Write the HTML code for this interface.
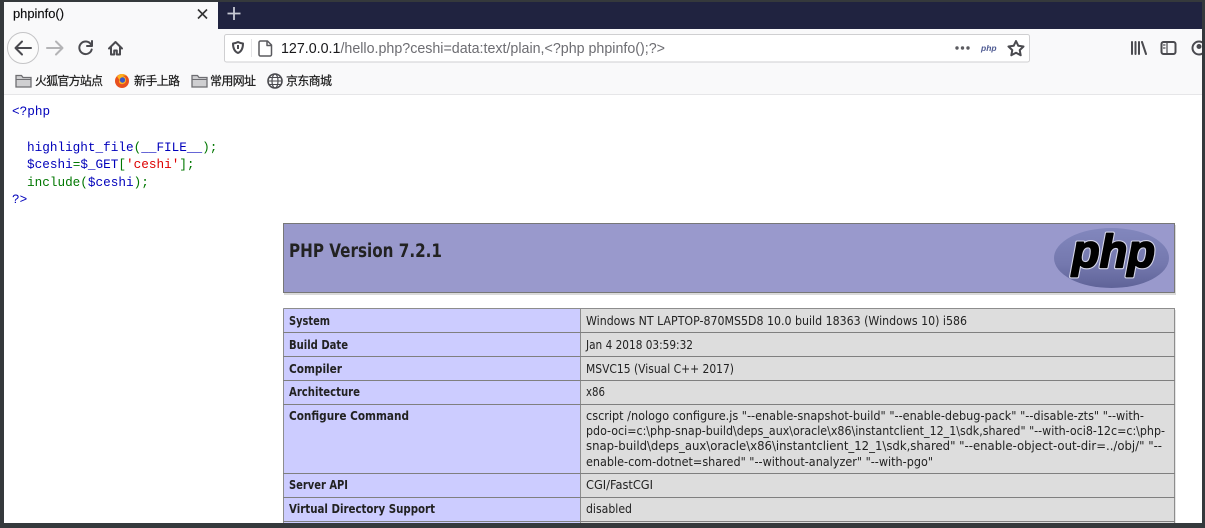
<!DOCTYPE html>
<html><head><meta charset="utf-8"><title>phpinfo()</title>
<style>
html,body{margin:0;padding:0;background:#35393c;width:1205px;height:528px;overflow:hidden}
svg{display:block;filter:blur(.3px)}
text{font-family:"Liberation Sans","Noto Sans CJK SC",sans-serif;white-space:pre}
.c{font-family:"Liberation Mono","Noto Sans CJK SC",monospace;font-size:12.7px}
.t{font-family:"DejaVu Sans","Liberation Sans",sans-serif;font-size:12.4px;fill:#222}
.b{font-family:"DejaVu Sans","Liberation Sans",sans-serif;font-size:12.4px;font-weight:bold;fill:#222}
.k{font-size:12px;fill:#1a1a1a;stroke:#1a1a1a;stroke-width:.2px}
.ic{fill:none;stroke:#4a4a4f;stroke-width:2px;stroke-linecap:round;stroke-linejoin:round}
</style></head><body>
<svg width="1205" height="528" viewBox="0 0 1205 528" xmlns="http://www.w3.org/2000/svg">
<defs><linearGradient id="lg" x1="0" y1="0" x2="0" y2="1"><stop offset="0" stop-color="#8287bd"/><stop offset=".6" stop-color="#7478ae"/><stop offset="1" stop-color="#5f6398"/></linearGradient></defs>
<rect width="1205" height="528" fill="#35393c"/>
<clipPath id="pg"><rect x="4" y="2" width="1198" height="521"/></clipPath>
<g clip-path="url(#pg)">
<rect x="4" y="2" width="1198" height="27" fill="#202340"/>
<rect x="4" y="2" width="214" height="27" fill="#f9f9fa"/>
<rect x="4" y="29" width="1198" height="65" fill="#f9f9fa"/>
<rect x="4" y="94" width="1198" height="1" fill="#e6e6e8"/>
<rect x="4" y="95" width="1198" height="430" fill="#fff"/>

<text x="13" y="18" font-size="12.5" fill="#0c0c0d" stroke="#0c0c0d" stroke-width=".15" textLength="51" lengthAdjust="spacingAndGlyphs">phpinfo()</text>
<path d="M198 9.500l9 9M207 9.500l-9 9" stroke="#333" stroke-width="1.6" fill="none"/>
<path d="M234 7v13M227.500 13.500h13" stroke="#c8cad4" stroke-width="1.800" fill="none"/>

<circle cx="23" cy="48" r="15.500" fill="#fbfbfb" stroke="#c4c4c6"/>
<path d="M31 48H16M22 41.500l-6.500 6.500 6.500 6.500" class="ic"/>
<path d="M62 48H47M56 41.500l6.500 6.500-6.500 6.500" class="ic" style="stroke:#b4b4b6"/>
<path d="M91 44.500a6.300 6.300 0 1 0 .7 5" class="ic"/>
<path d="M92 41v5h-5" class="ic"/>
<path d="M109 48.500l6.500-6.500 6.500 6.500M111 47v7.500h3.200v-4h2.600v4h3.200V47" class="ic"/>

<rect x="224.500" y="34.500" width="805" height="27.500" rx="2" fill="#fff" stroke="#cfcfd1"/>
<path d="M233 43.500c2-.2 3.800-.8 5-1.500 1.200.7 3 1.300 5 1.500 0 5-1.500 8-5 9.500-3.500-1.500-5-4.500-5-9.500z" class="ic"/>
<rect x="237" y="45" width="2" height="4" fill="#4a4a4f"/>
<line x1="251.500" y1="39" x2="251.500" y2="57" stroke="#e4e4e6"/>
<path d="M260.500 41h7l4 4v9.500a1.500 1.500 0 0 1-1.500 1.500h-9.500a1.500 1.500 0 0 1-1.500-1.500v-12a1.500 1.500 0 0 1 1.500-1.500zM267 41v4.500h4.500" class="ic" style="stroke:#5a5a5f;stroke-width:1.500px"/>
<text x="281" y="53" font-size="14.400" fill="#18181a" textLength="384" lengthAdjust="spacingAndGlyphs">127.0.0.1<tspan fill="#6d6d72">/hello.php?ceshi=data:text/plain,&lt;?php phpinfo();?&gt;</tspan></text>
<circle cx="957" cy="48" r="1.700" fill="#5b5b60"/><circle cx="962.500" cy="48" r="1.700" fill="#5b5b60"/><circle cx="968" cy="48" r="1.700" fill="#5b5b60"/>
<text x="981" y="51" font-size="8.500" font-weight="bold" font-style="italic" fill="#4f5b93">php</text>
<path d="M1016 41l2.300 4.800 5.200.7-3.800 3.600 1 5.200-4.700-2.500-4.700 2.500 1-5.200-3.800-3.600 5.200-.7z" class="ic"/>

<path d="M1132 42v12M1135.500 42v12M1139 42v12M1142 42l4 12" class="ic"/>
<rect x="1161.500" y="42" width="14" height="12" rx="2" class="ic"/>
<path d="M1167 42v12M1163.500 45h1.500M1163.500 48h1.500" class="ic" style="stroke-width:1.200px"/>
<circle cx="1199" cy="48" r="6.500" class="ic"/>
<circle cx="1199" cy="46.500" r="2.500" fill="#4a4a4f"/>

<g id="bm">
<path d="M16 75.500h5.500l1.500 2h8v9.500h-15z" fill="#cfcfd1" stroke="#6e6e72" stroke-width="1.300"/>
<path d="M16.500 79.500h14" stroke="#6e6e72"/>
<text x="35" y="85" class="k" textLength="68">火狐官方站点</text>
<circle cx="122" cy="81" r="7" fill="#e8501e"/>
<path d="M117 76.500a6.800 6.800 0 0 1 10-.5c-1.500-.6-3-.6-4.500 0 2.500.5 4 2.500 3.500 5s-3 3.500-5 3c-2-.5-2.500-2.500-1.500-4z" fill="#ffb21f"/>
<circle cx="122.500" cy="80" r="2.700" fill="#3a57c8"/>
<text x="134" y="85" class="k" textLength="46">新手上路</text>
<path d="M192 75.500h5.500l1.500 2h8v9.500h-15z" fill="#cfcfd1" stroke="#6e6e72" stroke-width="1.300"/>
<path d="M192.500 79.500h14" stroke="#6e6e72"/>
<text x="210" y="85" class="k" textLength="46">常用网址</text>
<circle cx="275" cy="81" r="7" fill="none" stroke="#4a4a4f" stroke-width="1.600"/>
<ellipse cx="275" cy="81" rx="3" ry="7" fill="none" stroke="#4a4a4f" stroke-width="1.200"/>
<path d="M268 81h14M269 77.500h12M269 84.500h12" stroke="#4a4a4f" stroke-width="1.100"/>
<text x="286" y="85" class="k" textLength="46">京东商城</text>
</g>

<text x="12" y="115" class="c" fill="#0000bb">&lt;?php</text>
<text x="27" y="151" class="c" fill="#0000bb">highlight_file<tspan fill="#007700">(</tspan>__FILE__<tspan fill="#007700">);</tspan></text>
<text x="27" y="168" class="c" fill="#0000bb">$ceshi<tspan fill="#007700">=</tspan>$_GET<tspan fill="#007700">[</tspan><tspan fill="#dd0000">'ceshi'</tspan><tspan fill="#007700">];</tspan></text>
<text x="27" y="186" class="c" fill="#007700">include(<tspan fill="#0000bb">$ceshi</tspan>);</text>
<text x="12" y="203" class="c" fill="#0000bb">?&gt;</text>

<rect x="284" y="225" width="892" height="70" fill="#000" opacity=".15"/>
<rect x="283.500" y="223.500" width="891" height="69" fill="#9999cc" stroke="#777"/>
<text x="289" y="257" style="font-family:'DejaVu Sans',sans-serif" font-size="18.500" font-weight="bold" fill="#222" textLength="153" lengthAdjust="spacingAndGlyphs">PHP Version 7.2.1</text>
<ellipse cx="1111.500" cy="258" rx="57.500" ry="30" fill="url(#lg)"/>
<text x="1072" y="267" font-size="46" font-weight="bold" font-style="italic" fill="#fff" stroke="#d5d6e8" stroke-width="4" stroke-linejoin="round" textLength="83" lengthAdjust="spacingAndGlyphs" style="font-family:'Liberation Sans',sans-serif">php</text>
<text x="1072" y="267" font-size="46" font-weight="bold" font-style="italic" fill="#000" stroke="#000" stroke-width="1.800" stroke-linejoin="round" textLength="83" lengthAdjust="spacingAndGlyphs" style="font-family:'Liberation Sans',sans-serif">php</text>

<rect x="284" y="310" width="892" height="220" fill="#000" opacity=".1"/>
<rect x="283" y="308" width="297" height="220" fill="#ccccff"/>
<rect x="580" y="308" width="595" height="220" fill="#dddddd"/>
<path d="M283.500 308.500H1174.500V528M283.500 308.500V528M580.500 308.500V528" fill="none" stroke="#8d8d8d"/>
<path d="M283 332.500H1175M283 356.500H1175M283 380.500H1175M283 404.500H1175M283 473.500H1175M283 497.500H1175M283 521.500H1175" stroke="#7f7f7f"/>

<text x="289" y="325" class="b" textLength="41" lengthAdjust="spacingAndGlyphs">System</text>
<text x="289" y="349" class="b" textLength="59" lengthAdjust="spacingAndGlyphs">Build Date</text>
<text x="289" y="373" class="b" textLength="53" lengthAdjust="spacingAndGlyphs">Compiler</text>
<text x="289" y="396" class="b" textLength="71" lengthAdjust="spacingAndGlyphs">Architecture</text>
<text x="289" y="420" class="b" textLength="120" lengthAdjust="spacingAndGlyphs">Configure Command</text>
<text x="289" y="489" class="b" textLength="59" lengthAdjust="spacingAndGlyphs">Server API</text>
<text x="289" y="513" class="b" textLength="146" lengthAdjust="spacingAndGlyphs">Virtual Directory Support</text>

<text x="586" y="325" class="t" textLength="381" lengthAdjust="spacingAndGlyphs">Windows NT LAPTOP-870MS5D8 10.0 build 18363 (Windows 10) i586</text>
<text x="586" y="349" class="t" textLength="107" lengthAdjust="spacingAndGlyphs">Jan 4 2018 03:59:32</text>
<text x="586" y="373" class="t" textLength="148" lengthAdjust="spacingAndGlyphs">MSVC15 (Visual C++ 2017)</text>
<text x="586" y="396" class="t" textLength="19" lengthAdjust="spacingAndGlyphs">x86</text>
<text x="586" y="420" class="t" textLength="558" lengthAdjust="spacingAndGlyphs">cscript /nologo configure.js "--enable-snapshot-build" "--enable-debug-pack" "--disable-zts" "--with-</text>
<text x="586" y="435" class="t" textLength="579" lengthAdjust="spacingAndGlyphs">pdo-oci=c:\php-snap-build\deps_aux\oracle\x86\instantclient_12_1\sdk,shared" "--with-oci8-12c=c:\php-</text>
<text x="586" y="450" class="t" textLength="576" lengthAdjust="spacingAndGlyphs">snap-build\deps_aux\oracle\x86\instantclient_12_1\sdk,shared" "--enable-object-out-dir=../obj/" "--</text>
<text x="586" y="466" class="t" textLength="347" lengthAdjust="spacingAndGlyphs">enable-com-dotnet=shared" "--without-analyzer" "--with-pgo"</text>
<text x="586" y="489" class="t" textLength="67" lengthAdjust="spacingAndGlyphs">CGI/FastCGI</text>
<text x="586" y="513" class="t" textLength="46" lengthAdjust="spacingAndGlyphs">disabled</text>
</g>
</svg>
</body></html>
